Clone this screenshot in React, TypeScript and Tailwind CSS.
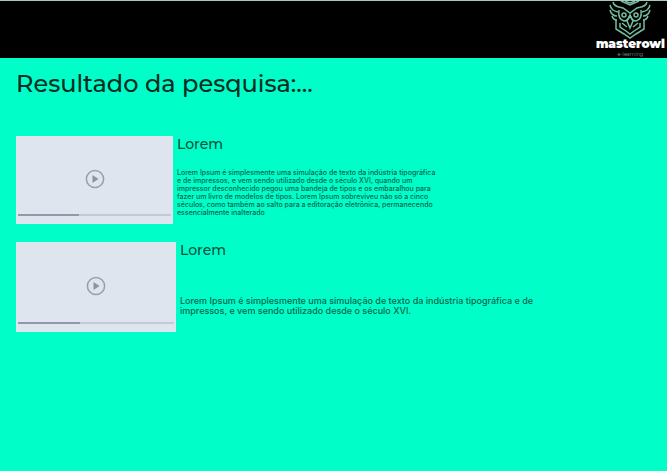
type Result = {
  title: string;
  lines: string[];
  thumb: string;
  text: string;
};

const results: Result[] = [
  {
    title: 'Lorem',
    lines: [
      'Lorem Ipsum é simplesmente uma simulação de texto da indústria tipográfica',
      'e de impressos, e vem sendo utilizado desde o século XVI, quando um',
      'impressor desconhecido pegou uma bandeja de tipos e os embaralhou para',
      'fazer um livro de modelos de tipos. Lorem Ipsum sobreviveu não só a cinco',
      'séculos, como também ao salto para a editoração eletrônica, permanecendo',
      'essencialmente inalterado',
    ],
    thumb: 'h-[88px] w-[157px]',
    text: 'mt-[17px] text-[7px] leading-[8px]',
  },
  {
    title: 'Lorem',
    lines: [
      'Lorem Ipsum é simplesmente uma simulação de texto da indústria tipográfica e de',
      'impressos, e vem sendo utilizado desde o século XVI.',
    ],
    thumb: 'h-[90px] w-[160px]',
    text: 'mt-[38px] text-[9px] leading-[10px]',
  },
];

function Owl() {
  return (
    <svg viewBox="0 0 44 38" className="h-[38px] w-11" fill="none" stroke="#74bd9f" strokeWidth="1.5" aria-hidden="true">
      <path d="M13 0 22 4 31 0M17 0l5 2 5-2" />
      <path d="M5 1c1 5 6 5 10 6l7 5 7-5c4-1 9-1 10-6" />
      <path d="M2 4c1 5 4 6 8 7M42 4c-1 5-4 6-8 7M2 9c1 4 4 6 7 6M42 9c-1 4-4 6-7 6M4 15c1 3 2 4 5 4M40 15c-1 3-2 4-5 4" />
      <path d="M11 9c-1 7 1 10 5 11 3 0 5-2 6-6M33 9c1 7-1 10-5 11-3 0-5-2-6-6" />
      <circle cx="16" cy="14" r="2" />
      <circle cx="28" cy="14" r="2" />
      <path d="m22 14-3 6 3 7 3-7Z" />
      <path d="M8 19v9l8 5 6 4 6-4 8-5v-9" />
      <path d="M12 22v4l6 4 4 3 4-3 6-4v-4M14 22l5 4M30 22l-5 4" />
    </svg>
  );
}

function Thumbnail({ size }: { size: string }) {
  return (
    <button
      type="button"
      aria-label="Reproduzir vídeo"
      className={`grid shrink-0 grid-rows-[1fr_auto] bg-[#dfe5ee] px-0.5 pb-2 ${size}`}
    >
      <svg viewBox="0 0 20 20" className="mt-2 size-5 place-self-center" aria-hidden="true">
        <circle cx="10" cy="10" r="8.6" fill="none" stroke="#979fad" strokeWidth="1.5" />
        <path d="m7.500 6 6 4-6 4Z" fill="#8b94a4" />
      </svg>
      <span className="block h-0.5 w-full bg-[#c3cad5]">
        <span className="block h-full w-2/5 bg-[#8f99a9]" />
      </span>
    </button>
  );
}

export default function App() {
  return (
    <div className="min-h-screen bg-[#00ffc8] font-['Montserrat','Inter',sans-serif]">
      <header className="flex h-[58px] justify-end border-t border-[#a9c9bd] bg-black pr-[2px]">
        <a href="#inicio" className="flex flex-col items-center">
          <Owl />
          <span className="-mt-0.5 text-[12px] leading-[14px] font-black text-white">masterowl</span>
          <span className="text-[5px] leading-[6px] text-[#7d9a90]">e-learning</span>
        </a>
      </header>
      <main className="px-4 pt-2">
        <h1 className="text-[24px] leading-9 font-medium text-[#042c23]">Resultado da pesquisa:...</h1>
        <ul className="mt-[34px] flex flex-col gap-[18px]">
          {results.map((result, index) => (
            <li key={index} className="flex items-start gap-1">
              <Thumbnail size={result.thumb} />
              <article>
                <h2 className="text-[14px] leading-4 font-medium text-[#04513f]">{result.title}</h2>
                <p className={`font-['Inter',sans-serif] font-medium whitespace-nowrap text-[#04654f] ${result.text}`}>
                  {result.lines.map((line) => (
                    <span key={line} className="block">
                      {line}
                    </span>
                  ))}
                </p>
              </article>
            </li>
          ))}
        </ul>
      </main>
    </div>
  );
}
